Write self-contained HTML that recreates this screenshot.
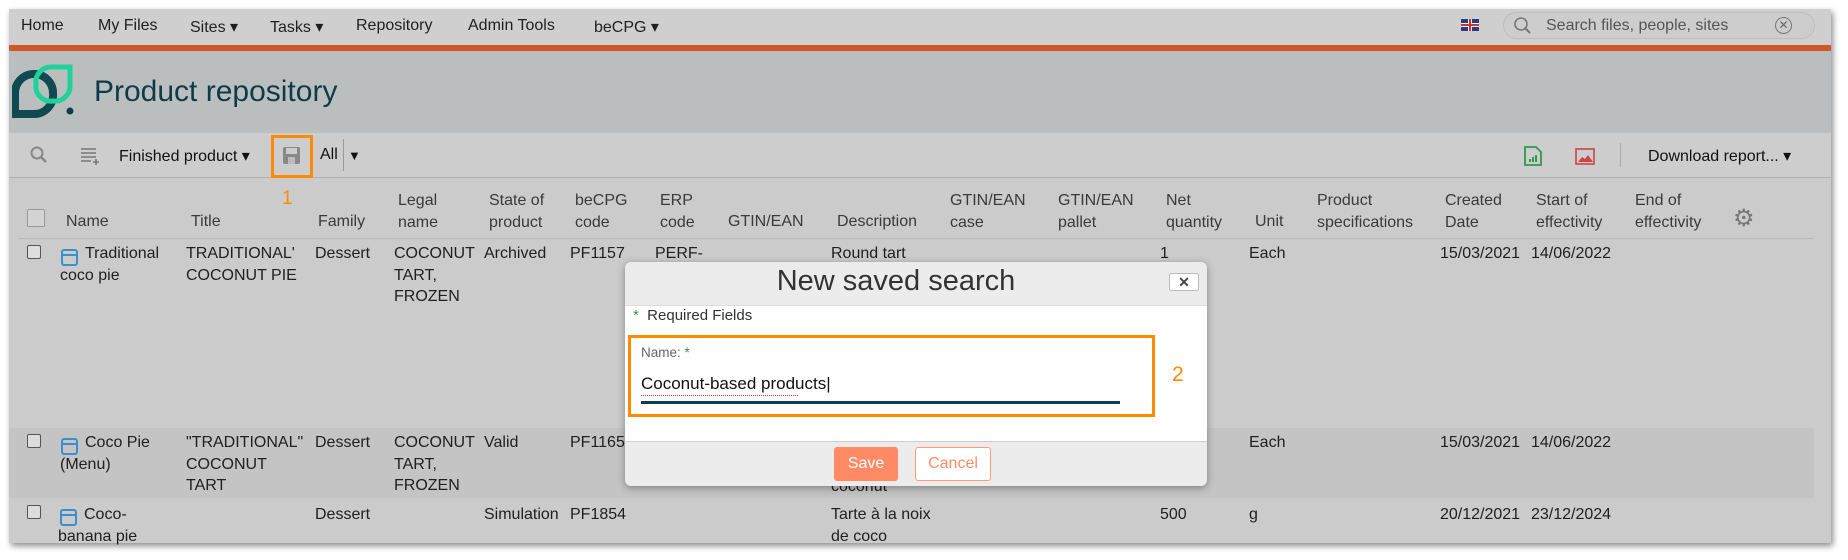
<!DOCTYPE html>
<html><head><meta charset="utf-8"><style>
*{margin:0;padding:0;box-sizing:border-box}
body{width:1848px;height:560px;background:#fff;font-family:"Liberation Sans",sans-serif;position:relative;overflow:hidden;color:#222}
.a{position:absolute;white-space:nowrap}
#page{position:absolute;left:9px;top:9px;width:1822px;height:534px;background:#cbcbcb;box-shadow:2px 3px 6px rgba(0,0,0,.45);overflow:hidden}
.nav{font-size:16px;color:#1f1f1f;top:17px}
.t{font-size:16px;line-height:21.5px;color:#202020}
.h{font-size:16px;line-height:21.5px;color:#3a3a3a}
.cb{position:absolute;width:14px;height:14px;border:1px solid #555;border-radius:2px;background:#ddd}
.ic{position:absolute;width:17px;height:17px;border:2px solid #3d8fc9;border-radius:3px}
.ic:after{content:"";position:absolute;left:0;right:0;top:3px;border-top:2px solid #3d8fc9}
</style></head><body>
<div id="page">
 <div class="a" style="left:0;top:0;width:1822px;height:36px;background:#cfcfcf"></div>
 <div class="a" style="left:0;top:36px;width:1822px;height:6px;background:#d0562b"></div>
 <div class="a" style="left:0;top:42px;width:1822px;height:82px;background:#bbbebf"></div>
 <div class="a" style="left:0;top:124px;width:1822px;height:45px;background:#cdcdcd;border-bottom:1px solid #b0b0b0"></div>
 <div class="a" style="left:0;top:419px;width:1805px;height:70px;background:#c4c4c4"></div>
 <div class="a" style="left:10px;top:229px;width:1795px;height:1px;background:#bababa"></div>
</div>
<!-- nav -->
<div class="a nav" style="left:21px">Home</div>
<div class="a nav" style="left:98px">My Files</div>
<div class="a nav" style="left:190px">Sites ▾</div>
<div class="a nav" style="left:270px">Tasks ▾</div>
<div class="a nav" style="left:356px">Repository</div>
<div class="a nav" style="left:468px">Admin Tools</div>
<div class="a nav" style="left:594px">beCPG ▾</div>
<div class="a" style="left:1461px;top:19px;width:18px;height:12px;background:#2a3c7a"><div style="position:absolute;left:7px;top:0;width:4px;height:12px;background:#eee"></div><div style="position:absolute;left:0;top:4px;width:18px;height:4px;background:#eee"></div><div style="position:absolute;left:8px;top:0;width:2px;height:12px;background:#c33"></div><div style="position:absolute;left:0;top:5px;width:18px;height:2px;background:#c33"></div></div>
<div class="a" style="left:1503px;top:12px;width:312px;height:27px;border:1px solid #bdbdbd;border-radius:14px;background:#cdcdcd"></div>
<svg class="a" style="left:1513px;top:16px" width="20" height="20"><circle cx="8" cy="8" r="6" fill="none" stroke="#777" stroke-width="1.6"/><path d="M12 12l5 5" stroke="#777" stroke-width="2"/></svg>
<div class="a" style="left:1546px;top:17px;font-size:16px;color:#555">Search files, people, sites</div>
<div class="a" style="left:1775px;top:17px;width:17px;height:17px;border:1.5px solid #777;border-radius:50%;font-size:12px;line-height:14px;text-align:center;color:#666">✕</div>
<!-- header -->
<svg class="a" style="left:12px;top:60px" width="64" height="58"><path d="M3 54V33a19 19 0 0 1 38 0 19 19 0 0 1-19 21z" fill="none" stroke="#0e4a4f" stroke-width="8"/><path d="M24 24a15 15 0 0 1 15-17h19v19a15 15 0 0 1-17 15 15 15 0 0 1-17-17z" fill="none" stroke="#1fd19a" stroke-width="5"/><circle cx="58" cy="51" r="3.5" fill="#0e3f48"/></svg>
<div class="a" style="left:94px;top:75px;font-size:30px;color:#0f3b48">Product repository</div>
<!-- toolbar -->
<svg class="a" style="left:29px;top:145px" width="20" height="20"><circle cx="8" cy="8" r="5.5" fill="none" stroke="#888" stroke-width="2"/><path d="M12 12l5 5" stroke="#888" stroke-width="2.5"/></svg>
<svg class="a" style="left:80px;top:147px" width="22" height="18"><path d="M1 2h15M1 6h15M1 10h15M1 14h10M16 12v6M13 15h6" stroke="#777" stroke-width="1.6"/></svg>
<div class="a" style="left:119px;top:146px;font-size:16px;color:#111">Finished product ▾</div>
<div class="a" style="left:271px;top:135px;width:42px;height:43px;border:3px solid #ff8a00"></div>
<svg class="a" style="left:282px;top:146px" width="20" height="20"><rect x="1" y="1" width="17" height="17" rx="2" fill="#888"/><rect x="4" y="2" width="11" height="6" fill="#ccc"/><rect x="6" y="11" width="7" height="7" fill="#bbb"/></svg>
<div class="a" style="left:320px;top:146px;font-size:16px;color:#111">All</div>
<div class="a" style="left:343px;top:139px;width:1px;height:32px;background:#999"></div>
<div class="a" style="left:348px;top:148px;font-size:13px;color:#111">▼</div>
<svg class="a" style="left:1524px;top:146px" width="18" height="20"><path d="M1 1h11l5 5v13H1z" fill="none" stroke="#2f9a50" stroke-width="1.8"/><path d="M6 16v-3M9 16v-5M12 16v-7" stroke="#2f9a50" stroke-width="2"/></svg>
<svg class="a" style="left:1575px;top:148px" width="20" height="17"><rect x="1" y="1" width="18" height="15" fill="none" stroke="#cc4444" stroke-width="1.6"/><path d="M3 14l4-5 3 2 3-4 5 7z" fill="#cc4444"/></svg>
<div class="a" style="left:1620px;top:143px;width:1px;height:24px;background:#aaa"></div>
<div class="a" style="left:1648px;top:146px;font-size:16px;color:#111">Download report... ▾</div>
<div class="a" style="left:282px;top:188px;font-size:19px;color:#ff8a00">1</div>
<!-- table header -->
<div class="cb" style="left:27px;top:209px;width:18px;height:18px;background:#d3d3d3;border-color:#999"></div>
<div class="a h" style="left:66px;top:211px">Name</div>
<div class="a h" style="left:191px;top:211px">Title</div>
<div class="a h" style="left:318px;top:211px">Family</div>
<div class="a h" style="left:398px;top:190px">Legal<br>name</div>
<div class="a h" style="left:489px;top:190px">State of<br>product</div>
<div class="a h" style="left:575px;top:190px">beCPG<br>code</div>
<div class="a h" style="left:660px;top:190px">ERP<br>code</div>
<div class="a h" style="left:728px;top:211px">GTIN/EAN</div>
<div class="a h" style="left:837px;top:211px">Description</div>
<div class="a h" style="left:950px;top:190px">GTIN/EAN<br>case</div>
<div class="a h" style="left:1058px;top:190px">GTIN/EAN<br>pallet</div>
<div class="a h" style="left:1166px;top:190px">Net<br>quantity</div>
<div class="a h" style="left:1255px;top:211px">Unit</div>
<div class="a h" style="left:1317px;top:190px">Product<br>specifications</div>
<div class="a h" style="left:1445px;top:190px">Created<br>Date</div>
<div class="a h" style="left:1536px;top:190px">Start of<br>effectivity</div>
<div class="a h" style="left:1635px;top:190px">End of<br>effectivity</div>
<div class="a" style="left:1733px;top:204px;font-size:24px;color:#777">⚙</div>
<!-- row1 -->
<div class="cb" style="left:27px;top:245px"></div>
<div class="ic" style="left:61px;top:249px"></div>
<div class="a t" style="left:85px;top:243px">Traditional</div>
<div class="a t" style="left:60px;top:265px">coco pie</div>
<div class="a t" style="left:186px;top:243px">TRADITIONAL'<br>COCONUT PIE</div>
<div class="a t" style="left:315px;top:243px">Dessert</div>
<div class="a t" style="left:394px;top:243px">COCONUT<br>TART,<br>FROZEN</div>
<div class="a t" style="left:484px;top:243px">Archived</div>
<div class="a t" style="left:570px;top:243px">PF1157</div>
<div class="a t" style="left:655px;top:243px">PERF-</div>
<div class="a t" style="left:831px;top:243px">Round tart</div>
<div class="a t" style="left:1160px;top:243px">1</div>
<div class="a t" style="left:1249px;top:243px">Each</div>
<div class="a t" style="left:1440px;top:243px">15/03/2021</div>
<div class="a t" style="left:1531px;top:243px">14/06/2022</div>
<!-- row2 -->
<div class="cb" style="left:27px;top:434px"></div>
<div class="ic" style="left:61px;top:438px"></div>
<div class="a t" style="left:85px;top:432px">Coco Pie</div>
<div class="a t" style="left:60px;top:454px">(Menu)</div>
<div class="a t" style="left:186px;top:432px">"TRADITIONAL"<br>COCONUT<br>TART</div>
<div class="a t" style="left:315px;top:432px">Dessert</div>
<div class="a t" style="left:394px;top:432px">COCONUT<br>TART,<br>FROZEN</div>
<div class="a t" style="left:484px;top:432px">Valid</div>
<div class="a t" style="left:570px;top:432px">PF1165</div>
<div class="a t" style="left:831px;top:476px">coconut</div>
<div class="a t" style="left:1249px;top:432px">Each</div>
<div class="a t" style="left:1440px;top:432px">15/03/2021</div>
<div class="a t" style="left:1531px;top:432px">14/06/2022</div>
<!-- row3 -->
<div class="cb" style="left:27px;top:505px"></div>
<div class="ic" style="left:60px;top:509px"></div>
<div class="a t" style="left:84px;top:504px">Coco-</div>
<div class="a t" style="left:58px;top:526px">banana pie</div>
<div class="a t" style="left:315px;top:504px">Dessert</div>
<div class="a t" style="left:484px;top:504px">Simulation</div>
<div class="a t" style="left:570px;top:504px">PF1854</div>
<div class="a t" style="left:831px;top:504px">Tarte à la noix<br>de coco</div>
<div class="a t" style="left:1160px;top:504px">500</div>
<div class="a t" style="left:1249px;top:504px">g</div>
<div class="a t" style="left:1440px;top:504px">20/12/2021</div>
<div class="a t" style="left:1531px;top:504px">23/12/2024</div>
<!-- dialog -->
<div class="a" style="left:625px;top:262px;width:582px;height:224px;background:#ececec;border-radius:6px;box-shadow:0 2px 8px rgba(0,0,0,.35);overflow:hidden">
 <div class="a" style="left:0;top:43px;width:582px;height:137px;background:#fff;border-top:1px solid #ddd;border-bottom:1px solid #ccc"></div>
 <div class="a" style="left:0;top:3px;width:542px;text-align:center;font-size:29px;color:#333">New saved search</div>
 <div class="a" style="left:544px;top:11px;width:30px;height:18px;border:1px solid #bbb;border-radius:2px;background:#fff;font-size:14px;line-height:16px;text-align:center;color:#444;font-weight:bold">✕</div>
 <div class="a" style="left:8px;top:45px;font-size:15px;color:#333"><span style="color:#393">*</span>&nbsp; Required Fields</div>
 <div class="a" style="left:3px;top:73px;width:527px;height:82px;border:3px solid #ff8a00"></div>
 <div class="a" style="left:16px;top:83px;font-size:13.5px;color:#666">Name: <span style="color:#393">*</span></div>
 <div class="a" style="left:16px;top:112px;font-size:17px;color:#111">Coconut-based products|</div>
 <div class="a" style="left:16px;top:133px;width:157px;border-top:1.5px dotted #e33"></div>
 <div class="a" style="left:16px;top:139px;width:479px;height:3px;background:#0e3d4f"></div>
 <div class="a" style="left:547px;top:101px;font-size:21px;color:#ff8a00">2</div>
 <div class="a" style="left:209px;top:185px;width:64px;height:34px;background:#ff8a65;border-radius:3px;color:#fff;font-size:16px;line-height:34px;text-align:center">Save</div>
 <div class="a" style="left:290px;top:185px;width:76px;height:34px;background:#fff;border:1px solid #ff9a7a;border-radius:3px;color:#ff8a65;font-size:16px;line-height:32px;text-align:center">Cancel</div>
</div>
</body></html>
